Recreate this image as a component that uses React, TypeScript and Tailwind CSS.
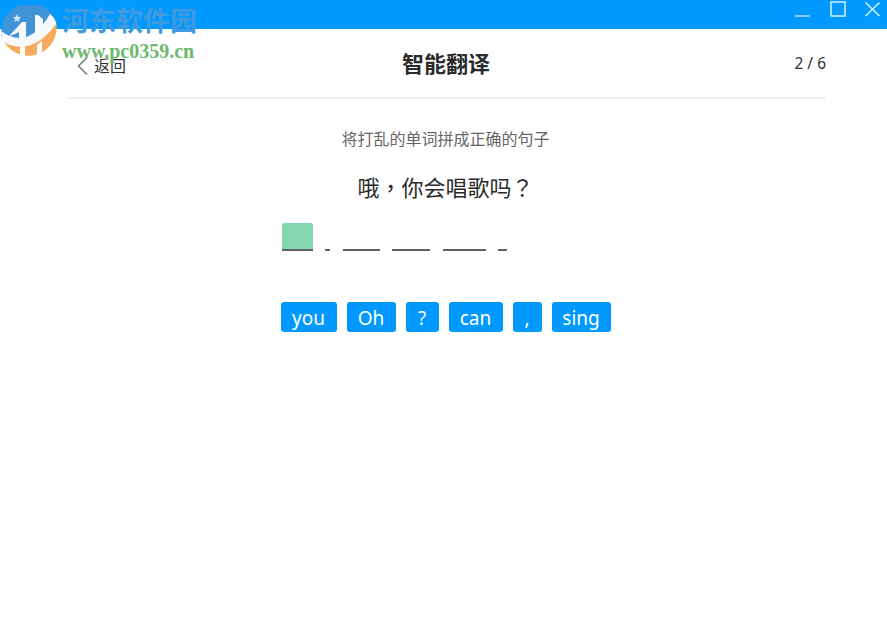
const blanks = [
  { w: "w-[31px]", active: true },
  { w: "w-[5px]", active: false },
  { w: "w-[37px]", active: false },
  { w: "w-[38px]", active: false },
  { w: "w-[43px]", active: false },
  { w: "w-[9px]", active: false },
];

const words = [
  { text: "you", w: "w-[56px]" },
  { text: "Oh", w: "w-[49px]" },
  { text: "?", w: "w-[33px]" },
  { text: "can", w: "w-[54px]" },
  { text: ",", w: "w-[29px]" },
  { text: "sing", w: "w-[59px]" },
];

const Watermark = () => (
  <div className="absolute left-0 top-[5px] flex">
    <svg width="58" height="58" viewBox="0 0 58 58" className="shrink-0">
      <path d="M2 33 Q30 50 56 16 A28.400 28.400 0 0 0 2 33 Z" fill="#3f93d6" />
      <path d="M2 33 Q30 50 56 16 A28.400 28.400 0 0 1 2 33 Z" fill="#f7ab5e" />
      <path d="M1 26 Q28 46 50 9 Q56 14 56 19 Q32 52 3 37 Z" fill="#f6fafd" />
      <path d="M10 30 L22 17 L26 17 L26 37 L19 37 L19 27 L10 31 Z" fill="#f6fafd" />
      <path d="M35 10 L38 10 L43 14 L43 32 L35 36 Z" fill="#f6fafd" />
      <path d="M20 40 L25 42 L25 58 L20 58 Z M37 40 L42 36 L42 54 L37 57 Z" fill="#ffffff" />
      <path d="M17 9 L18.200 11.800 L21 12.200 L19 14.200 L19.500 17 L17 15.500 L14.500 17 L15 14.200 L13 12.200 L15.800 11.800 Z" fill="#cfe6f8" />
    </svg>
    <div className="ml-[4px] flex flex-col font-['Liberation_Serif','Noto_Sans_CJK_SC',serif] font-bold leading-none">
      <span className="mt-[4px] text-[27px] text-[#3f9ae0]">河东软件园</span>
      <span className="mt-[5px] text-[20px] text-[#6db96d]">www.pc0359.cn</span>
    </div>
  </div>
);

const App = () => {
  return (
    <div className="relative h-[639px] w-[887px] overflow-hidden bg-white font-['Noto_Sans','Noto_Sans_CJK_SC',sans-serif]">
      <div className="flex h-[29px] items-start justify-end bg-[#0099ff]">
        <svg width="100" height="29" viewBox="787 0 100 29" className="shrink-0" fill="none" stroke="#d8f0ff">
          <path d="M795 16 H810" strokeWidth="1.200" />
          <rect x="831" y="2" width="14" height="14" strokeWidth="1.500" />
          <path d="M865.500 2.500 L879.500 16 M879.500 2.500 L865.500 16" strokeWidth="1.500" />
        </svg>
      </div>

      <div className="ml-[67px] w-[759px]">
        <div className="grid h-[70px] grid-cols-3 items-center border-b-2 border-[#f0f0f0]">
          <div className="flex items-center pl-[9px] pt-[5px] text-[16px] text-[#333333]">
            <svg width="14" height="20" viewBox="0 0 14 20" fill="none" stroke="#777777" strokeWidth="1.500" className="mr-[4px]">
              <path d="M11 1.500 L2.500 10 L11 18.500" />
            </svg>
            返回
          </div>
          <div className="-ml-[1px] text-center text-[22px] font-bold text-[#2b2b2b]">智能翻译</div>
          <div className="pt-[1px] text-right text-[15.500px] text-[#333333]">2 / 6</div>
        </div>

        <div className="-ml-[2px] flex flex-col items-center">
          <div className="mt-[29px] text-[16px] leading-[22px] text-[#666666]">将打乱的单词拼成正确的句子</div>
          <div className="mt-[20px] text-[22px] leading-[32px] text-[#2b2b2b]">
            哦<span className="font-['Noto_Sans_CJK_TC',sans-serif]">，</span>你会唱歌吗<span className="font-['Noto_Sans_CJK_TC',sans-serif]">？</span>
          </div>

          <div className="mt-[20px] flex w-[330px] items-end gap-[12.500px] pl-[1px]">
            {blanks.map((b, i) => (
              <div key={i} className={`${b.w} relative h-[28px] border-b-2 border-[#606266]`}>
                {b.active && <div className="absolute inset-x-0 bottom-0 h-[26px] rounded-t-[2px] bg-[#84d6ae]" />}
              </div>
            ))}
          </div>

          <div className="mt-[51px] flex gap-[10px]">
            {words.map((word) => (
              <div key={word.text} className={`${word.w} flex h-[30px] items-center justify-center rounded-[3px] bg-[#0099ff] pt-[2px] text-[19px] leading-none text-[#ffffff]`}>
                {word.text}
              </div>
            ))}
          </div>
        </div>
      </div>

      <Watermark />
    </div>
  );
};

export default App;
